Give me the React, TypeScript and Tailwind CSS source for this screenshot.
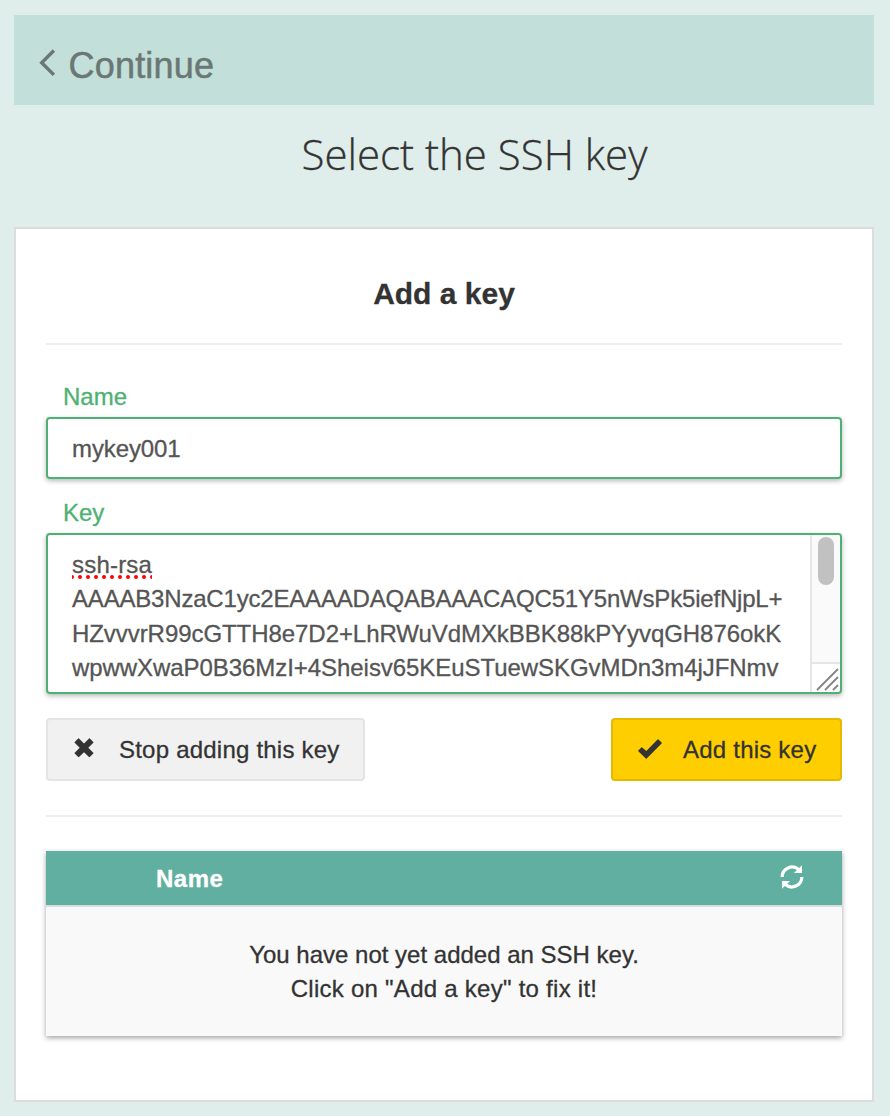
import type { ReactNode } from 'react';

const keyLines = [
  { text: 'AAAAB3NzaC1yc2EAAAADAQABAAACAQC51Y5nWsPk5iefNjpL+', style: 'tracking-[-0.19px]' },
  { text: 'HZvvvrR99cGTTH8e7D2+LhRWuVdMXkBBK88kPYyvqGH876okK', style: 'tracking-[-0.06px]' },
  { text: 'wpwwXwaP0B36MzI+4Sheisv65KEuSTuewSKGvMDn3m4jJFNmv', style: 'tracking-[-0.06px]' },
];

function BackIcon() {
  return (
    <svg width="18" height="30" viewBox="0 0 18 30" fill="none" stroke="#6a7774" strokeWidth="3.4">
      <path d="M15.900 2.500 3.700 14.700 15.900 26.900" />
    </svg>
  );
}

function CrossIcon() {
  return (
    <svg width="20" height="20" viewBox="0 0 20 20" fill="#333">
      <path d="M4.2.5q.4-.3.8 0L10 5.4 15 .5q.4-.3.8 0l3.5 3.5q.4.4 0 .8L14.3 9.8l5 4.9q.4.4 0 .8l-3.5 3.6q-.4.3-.8 0L10 14.2 5 19.100q-.4.3-.8 0L.7 15.500q-.4-.4 0-.8l5-4.900-5-5q-.4-.4 0-.8z" />
    </svg>
  );
}

function TickIcon() {
  return (
    <svg width="24" height="20" viewBox="0 0 24 20" fill="#333">
      <path d="M.3 12.300q-.4-.5 0-.9l3-2.900q.5-.4.9 0l4.100 3.500L19.500.4q.5-.5 1 0l3.100 3q.5.5 0 1L8.700 19.600q-.4.4-.9 0z" />
    </svg>
  );
}

function RefreshIcon() {
  return (
    <svg width="24" height="24" viewBox="0 0 24 24">
      <path d="M2.200 12A9.900 9.900 0 0 1 18.800 4.700M21.800 12A9.900 9.900 0 0 1 5.200 19.300" fill="none" stroke="#fff" strokeWidth="3.2" />
      <path d="M22 .2V8H13.900zM2 23.800V16h8.100z" fill="#fff" />
    </svg>
  );
}

function FieldLabel({ children }: { children: ReactNode }) {
  return <label className="block h-[34px] pl-[17px] leading-[34px] text-[#4eb173]">{children}</label>;
}

function KeyField() {
  return (
    <div className="mt-[3px] flex h-[161px] justify-between overflow-hidden rounded-[4px] border-2 border-[#4eb173] bg-white pl-6 shadow-[0_2px_5px_rgba(0,0,0,0.28)]">
      <div className="pt-[13px] leading-[34.3px] text-[#555]">
        <div className="relative w-fit tracking-[0.2px]">
          ssh-rsa
          <svg className="absolute left-0 top-[27px]" width="80" height="4" viewBox="0 0 80 4" fill="red">
            {Array.from({ length: 11 }, (_, i) => (
              <circle key={i} cx={i * 8} cy="2" r="2" />
            ))}
          </svg>
        </div>
        {keyLines.map((line) => (
          <div key={line.text} className={line.style}>{line.text}</div>
        ))}
      </div>
      <div className="flex w-[30px] shrink-0 flex-col border-l-2 border-[#e6e6e6]">
        <div className="flex-1 bg-[#fafafa] pl-[6px] pt-[2px]">
          <div className="h-12 w-4 rounded-full bg-[#c1c1c1]" />
        </div>
        <div className="h-[30px] border-t-2 border-[#e6e6e6]">
          <svg width="28" height="28" viewBox="0 0 28 28" stroke="#868686" strokeWidth="1.900">
            <path d="M5 26 26 5M13 26 26 13M21 26 26 21" />
          </svg>
        </div>
      </div>
    </div>
  );
}

export default function App() {
  return (
    <div className="h-[1116px] w-[890px] overflow-hidden bg-[#dfeeea] pl-[14px] pr-4 pt-[15px] font-['Liberation_Sans',Arial,sans-serif] text-[24px] whitespace-nowrap text-[#333] [-webkit-text-stroke-width:0.3px]">
      <header className="flex h-[90px] bg-[#c3dfd9] pl-6 text-[#6a7774]">
        <div className="pt-[33px]">
          <BackIcon />
        </div>
        <span className="pl-[12.5px] pt-[31px] text-[36px] leading-[40px] tracking-[0.2px] [-webkit-text-stroke-width:0.5px]">Continue</span>
      </header>
      <h1 className="h-[122px] pl-[61px] pt-[19px] text-center font-['Open_Sans',sans-serif] text-[42px] leading-[60px] font-light">
        Select the SSH key
      </h1>
      <main className="h-[875px] border-2 border-[#dcdcdc] bg-white px-[30px]">
        <h2 className="pt-[48px] pb-[32px] text-center text-[30px] leading-[34px] font-bold">Add a key</h2>
        <hr className="border-t-2 border-[#eee]" />
        <div className="pt-[35px]">
          <FieldLabel>Name</FieldLabel>
          <input
            className="mt-[3px] block h-[62px] w-full rounded-[4px] border-2 border-[#4eb173] bg-white px-6 pt-[2px] tracking-[-0.1px] text-[#555] shadow-[0_2px_5px_rgba(0,0,0,0.28)] outline-none"
            defaultValue="mykey001"
            aria-label="Name"
          />
        </div>
        <div className="pt-[17px]">
          <FieldLabel>Key</FieldLabel>
          <KeyField />
        </div>
        <div className="mt-6 flex h-[63px] justify-between">
          <button className="flex w-[319px] items-center rounded-[4px] border-2 border-[#e4e4e4] bg-[#f1f1f1] pl-[26px] tracking-[0.22px]">
            <span className="pb-[3px]"><CrossIcon /></span>
            <span className="pl-[25px]">Stop adding this key</span>
          </button>
          <button className="flex w-[231px] items-center rounded-[4px] border-2 border-[#e6b800] bg-[#ffce00] pl-[25px] tracking-[0.22px]">
            <span className="pb-[2px]"><TickIcon /></span>
            <span className="pl-[21px]">Add this key</span>
          </button>
        </div>
        <hr className="mt-[34px] border-t-2 border-[#eee]" />
        <section className="mt-[34px] shadow-[0_2px_5px_rgba(0,0,0,0.36)]">
          <div className="flex h-[56px] items-center justify-between border-b-2 border-[#dcdcdc] bg-[#61afa0] pr-[38px] pl-[110px] font-bold text-white">
            <span className="pt-[2px] tracking-[0.5px]">Name</span>
            <span className="pb-[2px]"><RefreshIcon /></span>
          </div>
          <div className="h-[129px] bg-[#f9f9f9] pt-[31px] text-center leading-[34.3px]">
            You have not yet added an SSH key.
            <br />
            <span className="tracking-[0.26px]">Click on "Add a key" to fix it!</span>
          </div>
        </section>
      </main>
    </div>
  );
}
